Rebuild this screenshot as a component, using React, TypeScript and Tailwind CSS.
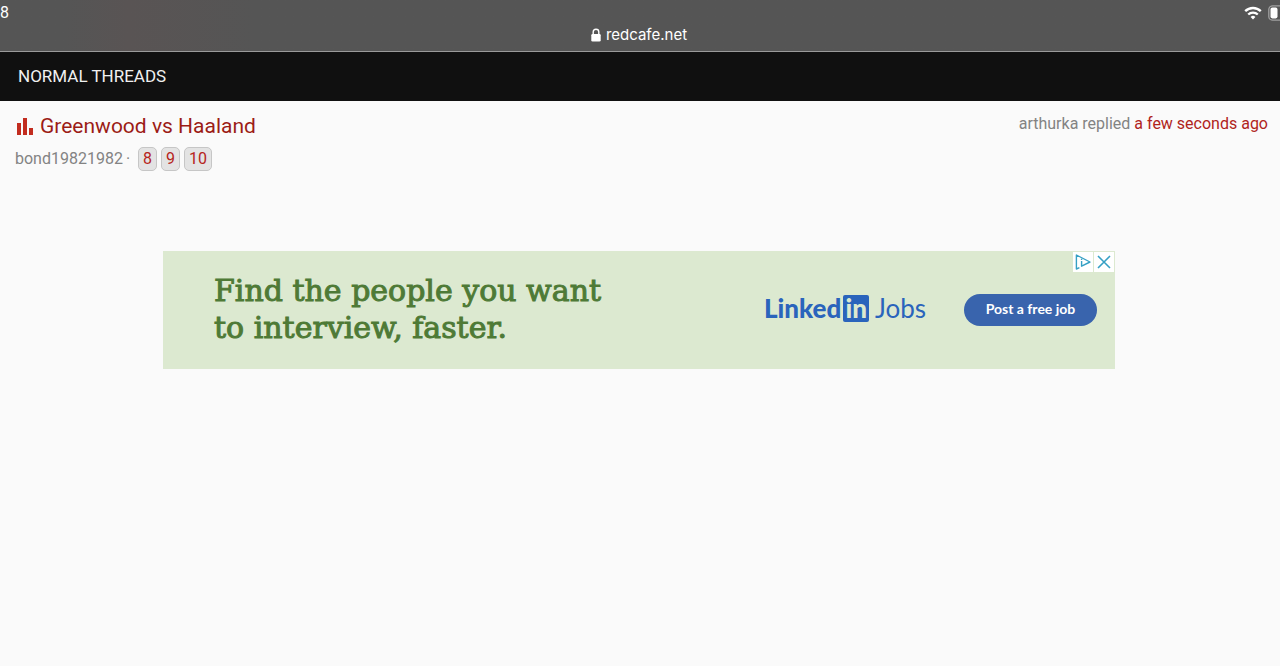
const pages = [8, 9, 10];

function WifiIcon() {
  return (
    <svg viewBox="0 0 18 14" className="h-[14px] w-[18px]" fill="none" aria-hidden="true">
      <path d="M1.2 5.2a11.2 11.2 0 0 1 15.6 0" stroke="white" strokeWidth="2.4" />
      <path d="M4.2 8.5a7 7 0 0 1 9.6 0" stroke="white" strokeWidth="2.3" />
      <path d="M9 13.4 6.6 11a3.5 3.5 0 0 1 4.8 0z" fill="white" />
    </svg>
  );
}

function BatteryIcon() {
  return (
    <svg viewBox="0 0 12 16" className="h-4 w-3" fill="none" aria-hidden="true">
      <path d="M12 .8H4.5A3.7 3.7 0 0 0 .8 4.5v7a3.7 3.7 0 0 0 3.7 3.7H12" stroke="#a0a0a0" strokeWidth="1.3" />
      <rect x="2.5" y="2.6" width="7" height="10.8" rx="1.8" fill="white" />
    </svg>
  );
}

function LockIcon() {
  return (
    <svg viewBox="0 0 10 14" className="h-[14px] w-[10px]" aria-hidden="true">
      <path d="M2.2 7V4a2.8 2.8 0 0 1 5.6 0v3" fill="none" stroke="white" strokeWidth="1.4" />
      <rect x="0.3" y="6" width="9.4" height="7.6" rx="1.3" fill="white" />
    </svg>
  );
}

function PollIcon() {
  return (
    <svg viewBox="0 0 16 17" className="h-[17px] w-4" fill="#c22c1f" aria-hidden="true">
      <rect x="0" y="5" width="4" height="12" />
      <rect x="6" y="0" width="4" height="17" />
      <rect x="12" y="10" width="4" height="7" />
    </svg>
  );
}

function BrowserBar() {
  return (
    <header className="overflow-hidden border-b border-[#9a9a9a] bg-[#555555] bg-linear-to-r from-[#555555] from-5% via-[#595454] via-10% to-[#555555] to-20% text-white">
      <div className="flex h-[26px] items-center justify-between">
        <span className="text-base">8</span>
        <div className="flex items-center gap-[6px]">
          <WifiIcon />
          <BatteryIcon />
        </div>
      </div>
      <div className="flex h-[25px] items-start justify-center gap-[5px] pr-[2px]">
        <span className="pt-[2px]">
          <LockIcon />
        </span>
        <span className="font-[Inter,sans-serif] text-[15px] leading-[18px]">redcafe.net</span>
      </div>
    </header>
  );
}

function ThreadRow() {
  return (
    <article className="flex items-start justify-between pt-3 pr-3 pl-[15px]">
      <div>
        <h3 className="flex h-[26px] items-center gap-[7px] pl-[2px] text-[21px] leading-[26px] text-[#9c1c16]">
          <PollIcon />
          <a href="#thread">Greenwood vs Haaland</a>
        </h3>
        <div className="mt-2 flex h-6 items-center text-base text-[#838383]">
          <a href="#author">bond19821982</a>
          <span className="ml-[3px]">·</span>
          <nav aria-label="Thread pages" className="ml-2 flex gap-1">
            {pages.map((page) => (
              <a
                key={page}
                href={`#page-${page}`}
                className="rounded-[5px] border border-[#c6c6c6] bg-[#e3e3e3] px-1 leading-[22px] text-[#b6251c]"
              >
                {page}
              </a>
            ))}
          </nav>
        </div>
      </div>
      <p className="text-base leading-[22px] text-[#838383]">
        arthurka replied{" "}
        <a href="#latest" className="text-[#b0241c]">
          a few seconds ago
        </a>
      </p>
    </article>
  );
}

function JobsBanner() {
  return (
    <aside className="relative mx-auto flex min-h-[118px] w-full max-w-[952px] items-center justify-between bg-[#dce9d0] pr-[18px] pl-[51px]">
      <p className="pb-[3px] font-['DejaVu_Serif',serif] text-[30px] leading-[37px] text-[#4e7a36] [-webkit-text-stroke:1px_#4e7a36]">
        Find the people you want
        <br />
        to interview, faster.
      </p>
      <div className="flex items-center gap-[38px] font-[Lato,sans-serif]">
        <div className="flex items-center pb-[3px] text-[#2a64bc]">
          <span className="text-[26px] leading-[27px] font-black">Linked</span>
          <span className="ml-[2px] rounded-xs bg-[#2a64bc] px-[2px] text-[26px] leading-[27px] font-black text-[#dce9d0]">
            in
          </span>
          <span className="ml-[6px] text-[26px] leading-[27px]">Jobs</span>
        </div>
        <button
          type="button"
          className="h-8 w-[133px] rounded-full bg-[#3964ad] pb-[2px] text-sm font-bold text-white"
        >
          Post a free job
        </button>
      </div>
      <div className="absolute top-px right-px flex gap-px">
        <button type="button" aria-label="Ad choices" className="flex h-5 w-5 items-center justify-center bg-white">
          <svg viewBox="0 0 16 16" className="h-4 w-4" fill="none" stroke="#36a0c4" strokeWidth="1.4">
            <path d="M4.4 13.6 1.4 15V1L15 8 6.6 12.2V7" strokeLinejoin="round" />
            <path d="M6.6 4.6V6" />
          </svg>
        </button>
        <button type="button" aria-label="Close ad" className="flex h-5 w-5 items-center justify-center bg-white">
          <svg viewBox="0 0 14 14" className="h-[14px] w-[14px]" fill="none" stroke="#36a0c4" strokeWidth="1.6">
            <path d="m1 1 12 12M13 1 1 13" />
          </svg>
        </button>
      </div>
    </aside>
  );
}

export default function App() {
  return (
    <div className="min-h-screen bg-[#fafafa] font-[Roboto,sans-serif]">
      <BrowserBar />
      <h2 className="bg-[#101010] px-[18px] text-[17px] leading-[49px] text-[#f0f0f0]">NORMAL THREADS</h2>
      <main>
        <ThreadRow />
        <div className="mt-20 pr-[2px]">
          <JobsBanner />
        </div>
      </main>
    </div>
  );
}
